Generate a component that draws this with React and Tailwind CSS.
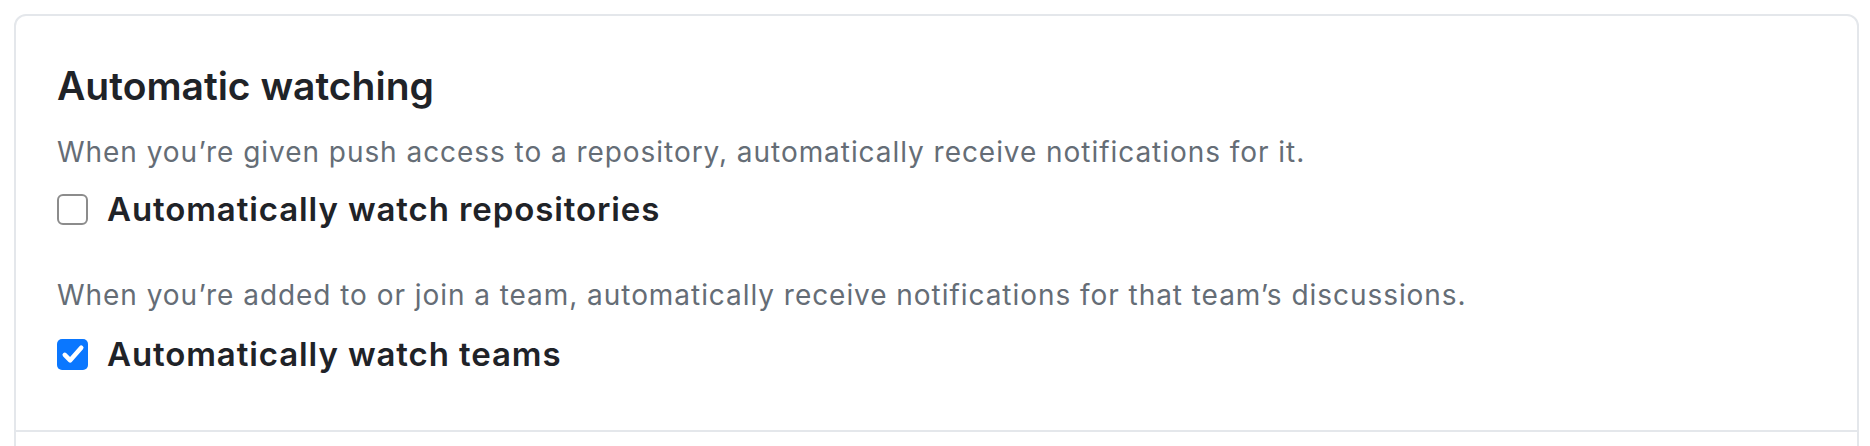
import React, { useState } from 'react';

function CheckIcon() {
  return (
    <svg viewBox="0 0 16 16" className="w-[28px] h-[28px]" fill="none">
      <path d="M3.3 8.5l3.1 3.1 6.3-7.2" stroke="white" strokeWidth="2.6" strokeLinecap="round" strokeLinejoin="round" />
    </svg>
  );
}

function Checkbox({ checked, onChange, label }) {
  return (
    <label className="flex items-center h-[40px] cursor-pointer select-none">
      <span
        onClick={onChange}
        className={
          checked
            ? 'w-[31px] h-[31px] rounded-[5px] bg-[#0a77ff] flex items-center justify-center'
            : 'w-[31px] h-[31px] rounded-[6px] border-2 border-[#8c8c8c] bg-white'
        }
      >
        {checked && <CheckIcon />}
      </span>
      <span className="ml-[19px] text-[33px] tracking-[0.9px] font-semibold text-[#1f2328] leading-[40px]">{label}</span>
    </label>
  );
}

export default function App() {
  const [repos, setRepos] = useState(false);
  const [teams, setTeams] = useState(true);

  return (
    <div className="w-[1870px] h-[446px] bg-white overflow-hidden font-['Inter',sans-serif]">
      <div className="ml-[14px] mt-[14px] w-[1845px] border-2 border-[#e4e7eb] rounded-t-[12px] bg-white">
        <div className="px-[41px] pt-[46px] pb-[56px] border-b-2 border-[#e4e7eb]">
          <h2 className="text-[39px] leading-[48px] font-semibold text-[#1f2328]">Automatic watching</h2>
          <p className="mt-[22px] text-[28px] tracking-[0.95px] leading-[40px] text-[#656d76]">
            When you’re given push access to a repository, automatically receive notifications for it.
          </p>
          <div className="mt-[17px]">
            <Checkbox checked={repos} onChange={() => setRepos(!repos)} label="Automatically watch repositories" />
          </div>
          <p className="mt-[46px] text-[28px] tracking-[0.95px] leading-[40px] text-[#656d76]">
            When you’re added to or join a team, automatically receive notifications for that team’s discussions.
          </p>
          <div className="mt-[19px]">
            <Checkbox checked={teams} onChange={() => setTeams(!teams)} label="Automatically watch teams" />
          </div>
        </div>
        <div className="h-[120px]" />
      </div>
    </div>
  );
}
